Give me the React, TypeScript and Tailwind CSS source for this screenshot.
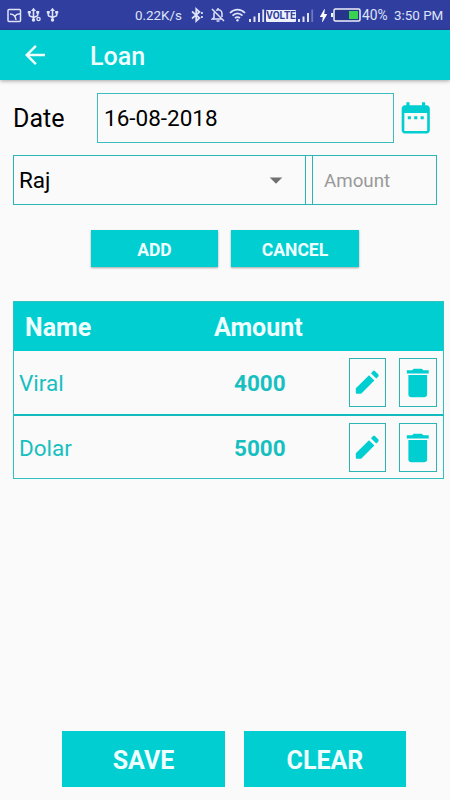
import type { ReactNode } from 'react';
import { MdArrowBack, MdArrowDropDown, MdBolt } from 'react-icons/md';

const LOANS = [
  { name: 'Viral', amount: 4000 },
  { name: 'Dolar', amount: 5000 },
];

function UsbIcon({ dot }: { dot?: boolean }) {
  return (
    <svg width="14" height="16" viewBox="0 0 14 16" fill="none" stroke="currentColor" strokeWidth="1.6">
      <path d="M6.5 3v9.500M2.300 5v3.300c0 1.500 4.200 1 4.200 3M10.700 5v3.300c0 1.500-4.200 1-4.200 3" />
      <path d="M6.500 0.800 4 4h5z" fill="currentColor" stroke="none" />
      <path d="M.8 4h3v2.600h-3zM9.200 4h3v2.600h-3z" fill="currentColor" stroke="none" />
      <circle cx="6.500" cy="13" r="1.700" fill="currentColor" stroke="none" />
      {dot && <circle cx="11.500" cy="12" r="1.600" strokeWidth="1.400" />}
    </svg>
  );
}

function SignalIcon({ weak }: { weak?: boolean }) {
  return (
    <svg width="16" height="13" viewBox="0 0 16 13" fill="currentColor">
      <path d="M0 10h2v3H0zM4.500 7.500h2V13h-2zM9 4h2v9H9z" />
      <path d="M13.300 0.500h1.800V13h-1.800z" opacity={weak ? 0.35 : 1} />
    </svg>
  );
}

function CalendarIcon({ className }: { className?: string }) {
  return (
    <svg className={className} viewBox="0 0 24 24" fill="currentColor">
      <path d="M19 4h-1V2h-2v2H8V2H6v2H5c-1.100 0-2 .9-2 2v14c0 1.100.9 2 2 2h14c1.100 0 2-.9 2-2V6c0-1.100-.9-2-2-2zm.3 16.400H4.700V9h14.600z" />
      <path d="M6.900 11h2v2h-2zM11 11h2v2h-2zM15.100 11h2v2h-2z" />
    </svg>
  );
}

function PencilIcon({ className }: { className?: string }) {
  return (
    <svg className={className} viewBox="0 0 24 24" fill="currentColor">
      <path d="M3 16.800V20.300q0 .7.700.7H7.200L17.600 10.600 13.400 6.400zM20.600 7.600c.5-.5.5-1.300 0-1.800L18.200 3.400c-.5-.5-1.300-.5-1.800 0L14.900 4.900l4.200 4.200z" />
    </svg>
  );
}

function TrashIcon({ className }: { className?: string }) {
  return (
    <svg className={className} viewBox="0 0 24 24" fill="currentColor">
      <path d="M6 19.500c0 1.100.9 1.800 2 1.800h8c1.100 0 2-.7 2-1.800V7H6zM19 4h-3.300l-1.200-1h-5L8.300 4H5v2h14z" />
    </svg>
  );
}

function StatusBar() {
  return (
    <div className="flex h-[30px] shrink-0 items-center bg-[#303f9f] pl-[7px] text-[13.4px] text-[#dfe3f8]">
      <svg width="15" height="15" viewBox="0 0 15 15" fill="none" stroke="currentColor" strokeWidth="1.5">
        <rect x="1" y="1.500" width="12.500" height="12" rx="1" />
        <path d="M3 6c3.500 0 5.500 2 6 6M8 8c1-1.500 2.500-2.200 5-2.300" />
      </svg>
      <div className="ml-[5px]">
        <UsbIcon dot />
      </div>
      <div className="ml-[5px]">
        <UsbIcon />
      </div>
      <span className="ml-[75px] w-[50px] whitespace-nowrap pt-0.5 leading-none">0.22K/s</span>
      <svg className="ml-[6px]" width="13" height="16" viewBox="0 0 13 16" fill="none" stroke="currentColor" strokeWidth="1.700">
        <path d="M1 4.500 8.500 11 5.200 14V2L8.500 5 1 11.500" />
        <path d="M10.900 5v2M10.900 9v2" />
      </svg>
      <svg className="ml-[7px]" width="14" height="16" viewBox="0 0 14 16" fill="none" stroke="currentColor" strokeWidth="1.500">
        <path d="M1 2l12 12M3 5.500v5L1.300 12H10.500M5 3.500c3-2 6 0 6 3V10M7 1v1.500" />
        <path d="M5.500 14h3" />
      </svg>
      <svg className="ml-[4px]" width="17" height="14" viewBox="0 0 17 14" fill="none" stroke="currentColor" strokeWidth="1.800">
        <path d="M1 5c4.300-4.600 10.700-4.600 15 0M3.500 7.700c3-3 7-3 10 0M6 10.200c1.500-1.500 3.500-1.500 5 0" />
        <circle cx="8.500" cy="12.200" r="1.200" fill="currentColor" stroke="none" />
      </svg>
      <div className="ml-[3px] w-4">
        <SignalIcon />
      </div>
      <span className="ml-px mt-0.5 flex h-3 w-[30px] items-center justify-center rounded-[1px] bg-[#eef0fc] text-[10px] font-bold leading-none text-[#303f9f]">
        VOLTE
      </span>
      <div className="ml-0.5 w-4">
        <SignalIcon weak />
      </div>
      <MdBolt className="ml-px size-[17px] text-white" />
      <svg className="-ml-px" width="30" height="14" viewBox="0 0 30 14">
        <path d="M0 5h2v4H0z" fill="#eef0fc" />
        <rect x="3" y="1" width="26" height="12" rx="1.500" fill="#27348c" stroke="#eef0fc" strokeWidth="1.500" />
        <path d="M18 3h9v8h-9z" fill="#39d353" />
      </svg>
      <span className="ml-px w-[27px] whitespace-nowrap pt-0.5 text-[13.8px] leading-none">40%</span>
      <span className="ml-[5px] whitespace-nowrap pt-0.5 leading-none">3:50 PM</span>
    </div>
  );
}

function IconBox({ children, className }: { children: ReactNode; className: string }) {
  return (
    <button className={`flex h-[49px] items-center justify-center border border-[#2bb5b5] text-[#00ced1] ${className}`}>
      {children}
    </button>
  );
}

export default function App() {
  return (
    <div className="flex h-[800px] w-[450px] flex-col overflow-hidden bg-[#fafafa] font-[Roboto,sans-serif] text-black">
      <StatusBar />
      <header className="flex h-[50px] shrink-0 items-center bg-[#00ced1] pl-5 text-[#effefe] shadow-[0_1px_4px_rgba(0,0,0,0.35)]">
        <MdArrowBack className="size-[30px]" />
        <h1 className="ml-10 pt-0.5 text-[25px] font-medium leading-none">Loan</h1>
      </header>

      <div className="mt-[13px] flex h-[50px] items-center pl-[13px]">
        <span className="w-[84px] pt-0.5 text-[25px]">Date</span>
        <div className="flex h-[50px] w-[297px] items-center border border-[#3dbdbd] pl-1.5 pt-0.5 text-[22.5px]">16-08-2018</div>
        <CalendarIcon className="ml-[3px] size-[37.5px] text-[#00ced1]" />
      </div>

      <div className="mt-3 flex h-[50px] pl-[13px]">
        <div className="flex w-[293px] items-center justify-between border border-[#2bb5b5] pl-[5px] pr-3.5 pt-0.5 text-[22.5px]">
          Raj
          <MdArrowDropDown className="-mt-0.5 size-[30px] text-[#707070]" />
        </div>
        <div className="w-[6px] border-y border-[#2bb5b5]" />
        <div className="flex w-[125px] items-center border border-[#2bb5b5] pl-[11px] pt-0.5 text-[18.75px] text-[#999]">Amount</div>
      </div>

      <div className="mt-[25px] flex gap-[13px] pl-[91px] text-[17.5px] font-bold text-[#effefe]">
        <button className="h-[37px] w-[127px] bg-[#00ced1] pt-[3px] shadow-[0_1px_2px_rgba(0,0,0,0.35)]">ADD</button>
        <button className="h-[37px] w-32 bg-[#00ced1] pt-[3px] shadow-[0_1px_2px_rgba(0,0,0,0.35)]">CANCEL</button>
      </div>

      <div className="ml-[13px] mt-[34px] w-[431px] border border-[#2fc0c0]">
        <div className="flex h-[49px] items-center bg-[#00ced1] pl-[11px] pt-[3px] text-[25px] font-bold text-[#effefe]">
          <span className="w-[189px]">Name</span>
          <span>Amount</span>
        </div>
        <div className="divide-y-2 divide-[#12bcbe]">
          {LOANS.map((loan) => (
            <div key={loan.name} className="flex items-center pb-1.5 pt-[7px] text-[22.5px] text-[#18bfc1] first:pb-[7px]">
              <span className="w-[214px] pl-[5px] pt-0.5">{loan.name}</span>
              <span className="w-[121px] pl-1.5 pt-0.5 font-bold">{loan.amount}</span>
              <IconBox className="w-[37px]">
                <PencilIcon className="size-[30.5px]" />
              </IconBox>
              <IconBox className="ml-[13px] w-[38px]">
                <TrashIcon className="size-[37.5px] shrink-0" />
              </IconBox>
            </div>
          ))}
        </div>
      </div>

      <div className="mb-[13px] mt-auto flex gap-[18px] pl-[62px] text-[25px] font-bold text-[#effefe]">
        <button className="h-14 w-[163px] bg-[#00ced1] pt-1">SAVE</button>
        <button className="ml-px h-14 w-[162px] bg-[#00ced1] pt-1">CLEAR</button>
      </div>
    </div>
  );
}
